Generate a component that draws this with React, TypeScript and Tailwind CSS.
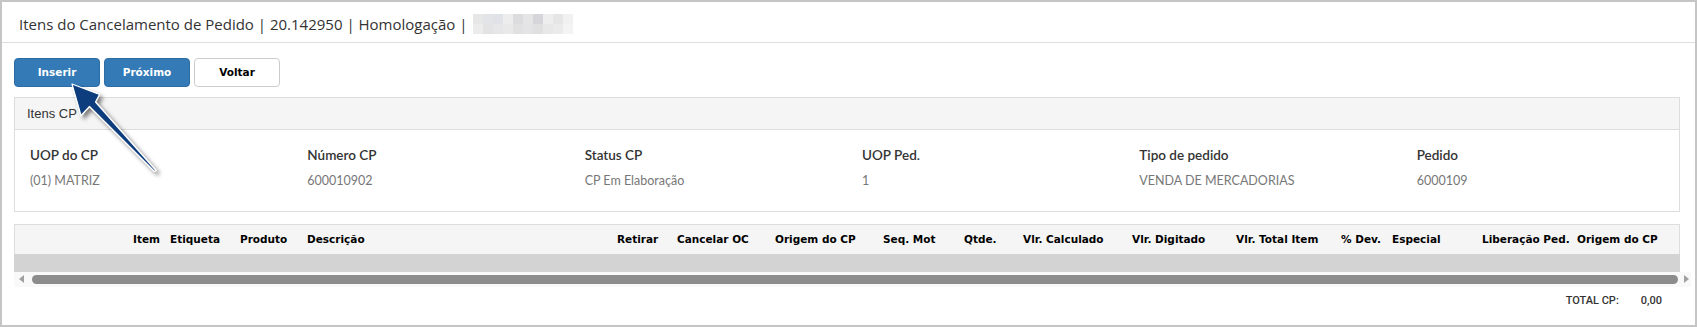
const mosaic = [
  ["#e7e7e7", "#e2e4e7", "#dfe3e7", "#ededed", "#dcdcdf", "#e5e5e5", "#d6d6da", "#eeeeee", "#e6e6e6", "#f1f1f1"],
  ["#ececec", "#e3e3e3", "#e6e6e8", "#e9e9e9", "#e1e1e1", "#e4e4e6", "#e0e0e0", "#e8e8e8", "#ebebeb", "#f4f4f4"],
];

const campos = [
  { label: "UOP do CP", value: "(01) MATRIZ" },
  { label: "Número CP", value: "600010902" },
  { label: "Status CP", value: "CP Em Elaboração" },
  { label: "UOP Ped.", value: "1" },
  { label: "Tipo de pedido", value: "VENDA DE MERCADORIAS" },
  { label: "Pedido", value: "6000109" },
];

const colunas = [
  { t: "", w: "w-[118px]" },
  { t: "Item", w: "w-[37px]" },
  { t: "Etiqueta", w: "w-[70px]" },
  { t: "Produto", w: "w-[67px]" },
  { t: "Descrição", w: "w-[310px]" },
  { t: "Retirar", w: "w-[60px]" },
  { t: "Cancelar OC", w: "w-[98px]" },
  { t: "Origem do CP", w: "w-[108px]" },
  { t: "Seq. Mot", w: "w-[81px]" },
  { t: "Qtde.", w: "w-[59px]" },
  { t: "Vlr. Calculado", w: "w-[109px]" },
  { t: "Vlr. Digitado", w: "w-[104px]" },
  { t: "Vlr. Total Item", w: "w-[105px]" },
  { t: "% Dev.", w: "w-[51px]" },
  { t: "Especial", w: "w-[90px]" },
  { t: "Liberação Ped.", w: "w-[95px]" },
  { t: "Origem do CP", w: "w-[85px]" },
];

const Seta = () => (
  <svg
    className="absolute left-0 top-0 pointer-events-none"
    width="200"
    height="200"
    viewBox="0 0 200 200"
  >
    <defs>
      <filter id="sombra" x="-50%" y="-50%" width="200%" height="200%">
        <feDropShadow dx="3" dy="3" stdDeviation="2.2" floodColor="#000" floodOpacity="0.5" />
      </filter>
    </defs>
    <polygon
      points="70,82 97.5,92.5 93.5,100 154,168.5 152.5,169.5 87.5,104.5 79,113.5"
      fill="#0b3c7d"
      stroke="#ffffff"
      strokeWidth="1.2"
      strokeLinejoin="round"
      filter="url(#sombra)"
    />
  </svg>
);

export default function App() {
  return (
    <div className="relative w-[1697px] h-[327px] bg-white border-2 border-[#c5c5c5] overflow-hidden">
      <div className="h-[41px] pt-1 pl-[17px] flex items-center border-b border-[#dddddd] font-['Open_Sans',sans-serif] text-[15px] text-[#333]">
        <span className="whitespace-nowrap">Itens do Cancelamento de Pedido | 20.142950 | Homologação |</span>
        <div className="ml-[6px] flex flex-col">
          {mosaic.map((linha, i) => (
            <div key={i} className="flex">
              {linha.map((c, j) => (
                <div key={j} className="w-[10px] h-[10px]" style={{ backgroundColor: c }} />
              ))}
            </div>
          ))}
        </div>
      </div>

      <div className="pl-[12px]">
        <div className="mt-[15px] flex gap-[4px] font-['DejaVu_Sans',sans-serif] font-bold text-[10.5px]">
          <button className="w-[86px] h-[29px] rounded-[4px] bg-[#337ab7] border border-[#2e6da4] text-white">
            Inserir
          </button>
          <button className="w-[86px] h-[29px] rounded-[4px] bg-[#337ab7] border border-[#2e6da4] text-white">
            Próximo
          </button>
          <button className="w-[86px] h-[29px] rounded-[4px] bg-white border border-[#cccccc] text-black">
            Voltar
          </button>
        </div>

        <div className="mt-[10px] w-[1666px] border border-[#dddddd]">
          <div className="h-[32px] pl-3 flex items-center bg-[#f5f5f5] border-b border-[#dddddd] font-['Liberation_Sans',sans-serif] text-[13px] text-[#333]">
            Itens CP
          </div>
          <div className="h-[81px] pt-[15px] grid grid-cols-6 font-['Lato',sans-serif]">
            {campos.map((c) => (
              <div key={c.label} className="pl-[15px]">
                <div className="h-[20px] leading-[20px] text-[13.5px] font-semibold text-[#333]">{c.label}</div>
                <div className="mt-[6px] h-[20px] leading-[20px] text-[12.5px] text-[#777]">{c.value}</div>
              </div>
            ))}
          </div>
        </div>

        <div className="mt-[12px] w-[1677px]">
          <div className="w-[1666px] h-[30px] flex items-center bg-[#f5f5f5] border border-b-0 border-[#dddddd] font-['DejaVu_Sans',sans-serif] font-bold text-[10.5px] text-black">
            {colunas.map((c, i) => (
              <div key={i} className={`${c.w} shrink-0 whitespace-nowrap`}>
                {c.t}
              </div>
            ))}
          </div>
          <div className="w-[1666px] h-[18px] bg-[#d3d3d3]" />
          <div className="h-[15px] flex items-start bg-[#f9f9f9]">
            <div className="ml-[5px] mt-[3px] w-0 h-0 border-y-[4px] border-y-transparent border-r-[5px] border-r-[#a0a0a0]" />
            <div className="ml-[8px] mt-[3px] w-[1646px] h-[9px] rounded-full bg-[#8c8c8c]" />
            <div className="ml-[6px] mt-[3px] w-0 h-0 border-y-[4px] border-y-transparent border-l-[5px] border-l-[#a0a0a0]" />
          </div>
        </div>

        <div className="mt-[4px] w-[1666px] h-[20px] pr-[18px] flex items-center justify-end gap-[22px] font-['Roboto',sans-serif] text-[11px] font-medium text-[#333]">
          <span>TOTAL CP:</span>
          <span>0,00</span>
        </div>
      </div>

      <Seta />
    </div>
  );
}
